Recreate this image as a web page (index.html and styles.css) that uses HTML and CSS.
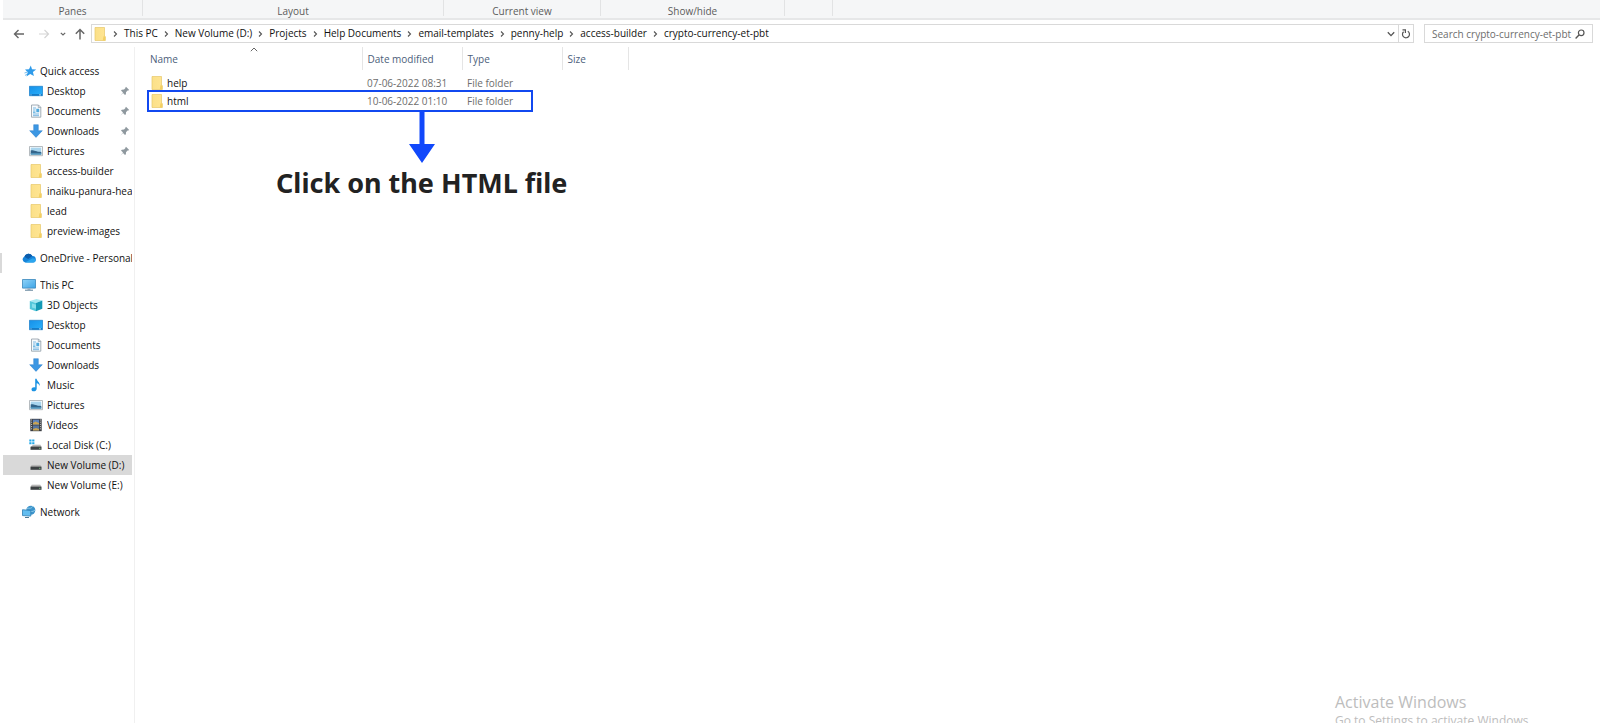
FILE: index.html
```html
<!DOCTYPE html>
<html lang="en">
<head>
<meta charset="utf-8">
<title>crypto-currency-et-pbt</title>
<link rel="stylesheet" href="styles.css">
</head>
<body>
<svg class="defs" aria-hidden="true">
  <defs>
    <linearGradient id="g-folder" x1="0" y1="0" x2="1" y2="0"><stop offset="0" stop-color="#fbe089"/><stop offset="1" stop-color="#ffe592"/></linearGradient>
    <linearGradient id="g-desk" x1="0" y1="0" x2="1" y2="1"><stop offset="0" stop-color="#1690e8"/><stop offset="1" stop-color="#2bb1fb"/></linearGradient>
    <linearGradient id="g-pc" x1="0" y1="0" x2="1" y2="1"><stop offset="0" stop-color="#8fd3f8"/><stop offset="1" stop-color="#3da4e6"/></linearGradient>
    <linearGradient id="g-drive" x1="0" y1="0" x2="0" y2="1"><stop offset="0" stop-color="#d2d2d2"/><stop offset="1" stop-color="#8c8c8c"/></linearGradient>
  </defs>
  <symbol id="i-folder" viewBox="0 0 14 14"><path d="M2 .5h9.500v8.500l.8.700v3.800H2z" fill="url(#g-folder)" stroke="#e6c768" stroke-width=".7"/><path d="M10.500 9.200h1.800v4.300H9.700z" fill="#f3cf62"/></symbol>
  <symbol id="i-star" viewBox="0 0 14 14"><path d="M7.800 1.500l1.200 3.700 4.200.3-3.300 2.600 1 4-3.700-2-3.800 2.400 1.300-4.300L2 5.400l4-.2z" fill="#2f9bea"/><path d="M1.500 9l3-1M2 11.500l2-1.500" stroke="#74bdf0" stroke-width="1"/></symbol>
  <symbol id="i-desktop" viewBox="0 0 14 14"><path d="M.4 2.300h13.200v9.400H.4z" fill="url(#g-desk)" stroke="#1478c6" stroke-width=".7"/><path d="M1 10.900h12" stroke="#0b64ac" stroke-width="1"/><path d="M1.500 10.900h1M10 10.900h2" stroke="#d5eeff" stroke-width=".8"/></symbol>
  <symbol id="i-document" viewBox="0 0 14 14"><path d="M2.500 1h7l2.300 2.300V13.200H2.500z" fill="#f8fbfd" stroke="#8e9ba5" stroke-width=".8"/><path d="M9.300 1v2.500h2.500" fill="none" stroke="#8e9ba5" stroke-width=".7"/><path d="M4 4h3M4 6h2.500M4 10h6M4 11.700h6" stroke="#69aede" stroke-width=".9"/><path d="M7.300 4.800h2.900v3.500H7.300zM4 7.500h2.500v1.200H4z" fill="#4fa9dd"/></symbol>
  <symbol id="i-download" viewBox="0 0 14 14"><path d="M4.700.7h4.600v6h4L7 13.400.7 6.700h4z" fill="#3c97e3" stroke="#2a7fcb" stroke-width=".5"/></symbol>
  <symbol id="i-picture" viewBox="0 0 14 14"><path d="M.5 2.500h13v9.200H.5z" fill="#fff" stroke="#a2a9ae" stroke-width=".8"/><path d="M1.700 3.600h10.600v7H1.700z" fill="#a9d5ee"/><path d="M1.700 6.600c2.500-1 4.500 1.200 10.600 1.500v2.500H1.700z" fill="#34658a"/><path d="M1.700 9.300h10.600v1.300H1.700z" fill="#5aa2c9"/></symbol>
  <symbol id="i-cloud" viewBox="0 0 14 14"><path d="M3.200 11.400A3 3 0 0 1 2.400 5.700 4.300 4.300 0 0 1 10.300 5a3.200 3.200 0 0 1 .6 6.400z" fill="#1683d8"/><path d="M2.400 5.700A4.300 4.300 0 0 1 10.300 5L6.200 8z" fill="#0b5cab"/><path d="M3 11.400l7.600-4.200q3 0 3 2.300t-2.700 1.900z" fill="#2ba5ee"/></symbol>
  <symbol id="i-pc" viewBox="0 0 14 14"><path d="M.5 1.500h13v8.600H.5z" fill="url(#g-pc)" stroke="#3986bb" stroke-width=".8"/><path d="M5.500 10.200h3v1.600h-3z" fill="#9bb2c2"/><path d="M3 12.200h8" stroke="#5c7f97" stroke-width="1"/></symbol>
  <symbol id="i-cube" viewBox="0 0 14 14"><path d="M.8 3L7.500 1 13.300 2.500 7 5z" fill="#a5e8f1"/><path d="M.8 3L7 5v8.300L.8 11z" fill="#53c7da"/><path d="M7 5l6.300-2.500v8.300L7 13.300z" fill="#169ab5"/><path d="M3 5.500l4 1.300v4L3 9.500z" fill="#87dfeb"/></symbol>
  <symbol id="i-music" viewBox="0 0 14 14"><path d="M6.200.8h1.400c.2 2.600 3.800 3.400 3.100 7.300-.3-1.800-1.500-2.600-3-2.900v5.600c0 3-5.200 3.500-5.200.7 0-2 2.100-2.700 3.700-2z" fill="#1c93e3"/></symbol>
  <symbol id="i-video" viewBox="0 0 14 14"><path d="M1.300.8h11.400v12.400H1.300z" fill="#3a3d42"/><path d="M4 1.600h6v5H4z" fill="#5d83bd"/><path d="M4 7.400h6v5H4z" fill="#56749f"/><path d="M4 5l2.500-1.500L10 5v1.600H4zM4 11l3-1 3 1v1.400H4z" fill="#caa452"/><path d="M2.600 1.500v11M11.400 1.500v11" stroke="#cdd0d3" stroke-width="1" stroke-dasharray="1 1.200"/></symbol>
  <symbol id="i-drive" viewBox="0 0 14 14"><path d="M2.800 6.600h8.400L12.500 9h-11z" fill="url(#g-drive)"/><path d="M1.500 8.800h11v3h-11z" fill="#3d4244"/><path d="M10.200 10.300h1.200" stroke="#8bdc92" stroke-width=".9"/></symbol>
  <symbol id="i-sysdrive" viewBox="0 0 14 14"><path d="M.3 1.500h2.200v2H.3zM3.200 1.500h2.200v2H3.200zM.3 4.300h2.200v2H.3zM3.200 4.300h2.200v2H3.200z" fill="#22a8e8"/><path d="M4.500 6.600h6.800L12.500 9h-11z" fill="url(#g-drive)"/><path d="M1.500 8.800h11v3h-11z" fill="#3d4244"/><path d="M10.200 10.300h1.200" stroke="#8bdc92" stroke-width=".9"/></symbol>
  <symbol id="i-network" viewBox="0 0 14 14"><circle cx="8.800" cy="5.200" r="4.500" fill="#3d94cb"/><path d="M5 4c2-2 3.500 1 6-3M6 8c2-3 4 0 7-3" stroke="#8dcbe9" fill="none"/><path d="M.5 4.700l8.300.8v5.600L.5 10.600z" fill="#62bdf0" stroke="#2d7db3" stroke-width=".8"/><path d="M3 12.500h4" stroke="#4c7894" stroke-width="1"/></symbol>
  <symbol id="i-pin" viewBox="0 0 10 10"><path d="M6 .8L9.200 4l-.9.600-.7-.1L6 6.200l-.1 2L5 9 3 7 .5 9.500 3 6.500l-2-2 .8-.8 2.200-.1L5.500 2l-.1-.6z" fill="#8f999f"/></symbol>
  <symbol id="i-chev" viewBox="0 0 17 10"><path d="M7 2.500L9.500 5 7 7.500" fill="none" stroke="#555" stroke-width="1.100"/></symbol>
</svg>

<header class="ribbon">
  <div class="ribbon-group panes">Panes</div>
  <div class="ribbon-group layout">Layout</div>
  <div class="ribbon-group view">Current view</div>
  <div class="ribbon-group show">Show/hide</div>
  <div class="ribbon-group options"></div>
</header>

<div class="toolbar">
  <div class="nav-buttons">
    <button class="nav-btn" aria-label="Back"><svg width="12" height="12" viewBox="0 0 12 12"><path d="M11 6H1.500M5.500 2L1.500 6l4 4" fill="none" stroke="#666" stroke-width="1.400"/></svg></button>
    <button class="nav-btn forward" aria-label="Forward"><svg width="12" height="12" viewBox="0 0 12 12"><path d="M1 6h9.500M6.500 2l4 4-4 4" fill="none" stroke="#d4d4d4" stroke-width="1.200"/></svg></button>
    <button class="nav-btn recent" aria-label="Recent locations"><svg width="6" height="6" viewBox="0 0 6 6"><path d="M.8 1.800L3 4l2.200-2.200" fill="none" stroke="#666" stroke-width="1.200"/></svg></button>
    <button class="nav-btn" aria-label="Up"><svg width="12" height="12" viewBox="0 0 12 12"><path d="M6 11.500V1.500M1.800 5.700L6 1.500l4.200 4.200" fill="none" stroke="#666" stroke-width="1.500"/></svg></button>
  </div>
  <nav class="address" aria-label="Address">
    <svg class="icon"><use href="#i-folder"/></svg>
    <ol class="crumbs">
      <li><svg class="chev"><use href="#i-chev"/></svg><a href="#">This PC</a></li>
      <li><svg class="chev"><use href="#i-chev"/></svg><a href="#">New Volume (D:)</a></li>
      <li><svg class="chev"><use href="#i-chev"/></svg><a href="#">Projects</a></li>
      <li><svg class="chev"><use href="#i-chev"/></svg><a href="#">Help Documents</a></li>
      <li><svg class="chev"><use href="#i-chev"/></svg><a href="#">email-templates</a></li>
      <li><svg class="chev"><use href="#i-chev"/></svg><a href="#">penny-help</a></li>
      <li><svg class="chev"><use href="#i-chev"/></svg><a href="#">access-builder</a></li>
      <li><svg class="chev"><use href="#i-chev"/></svg><a href="#">crypto-currency-et-pbt</a></li>
    </ol>
    <button class="history" aria-label="Previous locations"><svg width="8" height="8" viewBox="0 0 8 8"><path d="M.8 2.200L4 5.600l3.200-3.400" fill="none" stroke="#555" stroke-width="1.300"/></svg></button>
    <button class="refresh" aria-label="Refresh"><svg width="10" height="10" viewBox="0 0 10 10"><path d="M6.800 2.300A3.500 3.500 0 1 1 2.600 2.700M1.500.9h2.900v3" fill="none" stroke="#555" stroke-width="1.200"/></svg></button>
  </nav>
  <form class="search">
    <input type="search" aria-label="Search" placeholder="Search crypto-currency-et-pbt">
    <button type="button" aria-label="Search"><svg width="10" height="10" viewBox="0 0 10 10"><circle cx="6.200" cy="3.800" r="2.800" fill="none" stroke="#555" stroke-width="1.200"/><path d="M4.200 5.800L.6 9.400" stroke="#555" stroke-width="1.400"/></svg></button>
  </form>
</div>

<div class="explorer">
  <nav class="sidebar" aria-label="Folders">
    <ul class="group">
      <li><a class="item root quick" href="#"><svg class="icon"><use href="#i-star"/></svg><span>Quick access</span></a></li>
      <li><a class="item" href="#"><svg class="icon"><use href="#i-desktop"/></svg><span>Desktop</span><svg class="pin"><use href="#i-pin"/></svg></a></li>
      <li><a class="item" href="#"><svg class="icon"><use href="#i-document"/></svg><span>Documents</span><svg class="pin"><use href="#i-pin"/></svg></a></li>
      <li><a class="item" href="#"><svg class="icon"><use href="#i-download"/></svg><span>Downloads</span><svg class="pin"><use href="#i-pin"/></svg></a></li>
      <li><a class="item" href="#"><svg class="icon"><use href="#i-picture"/></svg><span>Pictures</span><svg class="pin"><use href="#i-pin"/></svg></a></li>
      <li><a class="item" href="#"><svg class="icon"><use href="#i-folder"/></svg><span>access-builder</span></a></li>
      <li><a class="item" href="#"><svg class="icon"><use href="#i-folder"/></svg><span>inaiku-panura-head</span></a></li>
      <li><a class="item" href="#"><svg class="icon"><use href="#i-folder"/></svg><span>lead</span></a></li>
      <li><a class="item" href="#"><svg class="icon"><use href="#i-folder"/></svg><span>preview-images</span></a></li>
    </ul>
    <ul class="group">
      <li><a class="item root" href="#"><svg class="icon"><use href="#i-cloud"/></svg><span>OneDrive - Personal</span></a></li>
    </ul>
    <ul class="group">
      <li><a class="item root" href="#"><svg class="icon"><use href="#i-pc"/></svg><span>This PC</span></a></li>
      <li><a class="item" href="#"><svg class="icon"><use href="#i-cube"/></svg><span>3D Objects</span></a></li>
      <li><a class="item" href="#"><svg class="icon"><use href="#i-desktop"/></svg><span>Desktop</span></a></li>
      <li><a class="item" href="#"><svg class="icon"><use href="#i-document"/></svg><span>Documents</span></a></li>
      <li><a class="item" href="#"><svg class="icon"><use href="#i-download"/></svg><span>Downloads</span></a></li>
      <li><a class="item" href="#"><svg class="icon"><use href="#i-music"/></svg><span>Music</span></a></li>
      <li><a class="item" href="#"><svg class="icon"><use href="#i-picture"/></svg><span>Pictures</span></a></li>
      <li><a class="item" href="#"><svg class="icon"><use href="#i-video"/></svg><span>Videos</span></a></li>
      <li><a class="item" href="#"><svg class="icon"><use href="#i-sysdrive"/></svg><span>Local Disk (C:)</span></a></li>
      <li><a class="item selected" href="#" aria-current="true"><svg class="icon"><use href="#i-drive"/></svg><span>New Volume (D:)</span></a></li>
      <li><a class="item" href="#"><svg class="icon"><use href="#i-drive"/></svg><span>New Volume (E:)</span></a></li>
    </ul>
    <ul class="group">
      <li><a class="item root" href="#"><svg class="icon"><use href="#i-network"/></svg><span>Network</span></a></li>
    </ul>
    <div class="edge-marker"></div>
  </nav>

  <main class="content">
    <table class="files">
      <colgroup><col class="c-name"><col class="c-date"><col class="c-type"><col class="c-size"></colgroup>
      <thead>
        <tr>
          <th scope="col" aria-sort="ascending">Name<svg class="sort" width="8" height="5" viewBox="0 0 8 5"><path d="M.8 4.200L4 1l3.200 3.200" fill="none" stroke="#666" stroke-width="1"/></svg></th>
          <th scope="col">Date modified</th><th scope="col">Type</th><th scope="col">Size</th>
        </tr>
      </thead>
      <tbody>
        <tr><td><a class="file" href="#"><svg class="icon"><use href="#i-folder"/></svg>help</a></td><td>07-06-2022 08:31</td><td>File folder</td><td></td></tr>
        <tr><td><a class="file" href="#"><svg class="icon"><use href="#i-folder"/></svg>html</a></td><td>10-06-2022 01:10</td><td>File folder</td><td></td></tr>
      </tbody>
    </table>
    <div class="highlight"></div>
    <div class="callout">
      <svg width="26" height="52" viewBox="0 0 26 52"><path d="M10.500 0h5v33H26L13 52 0 33h10.500z" fill="#1148fb"/></svg>
      <p>Click on the HTML file</p>
    </div>
  </main>
</div>

<aside class="watermark">
  <p class="watermark-title">Activate Windows</p>
  <p>Go to Settings to activate Windows.</p>
</aside>
</body>
</html>
```
FILE: styles.css
```css
* { box-sizing: border-box; }
html { height: 100%; }
body {
  margin: 0;
  height: 100%;
  position: relative;
  overflow: hidden;
  display: flex;
  flex-direction: column;
  background: #fff;
  color: #111;
  font: 10px/20px "Open Sans", "Noto Sans", sans-serif;
}
a { color: inherit; text-decoration: none; }
ul, ol, p { margin: 0; padding: 0; list-style: none; }
button { border: 0; padding: 0; background: none; font: inherit; display: flex; align-items: center; justify-content: center; }
.defs { position: absolute; width: 0; height: 0; }
.icon { width: 14px; height: 14px; flex: none; display: block; }

.ribbon {
  display: flex;
  flex: none;
  height: 20px;
  margin-left: 3px;
  background: #f5f6f7;
  border-bottom: 2px solid #e6e7e8;
  color: #5c5c5c;
}
.ribbon-group {
  height: 16px;
  border-right: 1px solid #e2e3e4;
  text-align: center;
  line-height: 22px;
}
.panes { width: 140px; }
.layout { width: 301px; }
.view { width: 157px; }
.show { width: 184px; }
.options { width: 48px; }

.toolbar {
  display: flex;
  flex: none;
  align-items: center;
  padding: 4px 7px 4px 13px;
}
.nav-buttons { display: flex; flex: none; align-items: center; width: 78px; gap: 6px; }
.nav-btn { height: 19px; }
.forward { margin-left: 7px; }
.recent { margin-left: 4px; }
.nav-btn:last-child { margin-left: 2px; }
.address {
  display: flex;
  flex: 1;
  align-items: center;
  height: 19px;
  margin-right: 10px;
  padding-left: 1px;
  border: 1px solid #d9d9d9;
}
.crumbs { display: flex; flex: 1; line-height: 17px; }
.crumbs li { display: flex; align-items: center; }
.chev { width: 17px; height: 10px; }
.history { width: 14px; height: 17px; }
.refresh { width: 15px; height: 17px; border-left: 1px solid #d9d9d9; }
.search {
  display: flex;
  flex: none;
  align-items: center;
  width: 169px;
  height: 19px;
  padding: 0 7px;
  border: 1px solid #d9d9d9;
}
.search input {
  flex: 1;
  min-width: 0;
  height: 17px;
  border: 0;
  padding: 0;
  outline: 0;
  background: none;
  font: inherit;
}
.search input::placeholder { color: #6d6d6d; opacity: 1; }
.search input::-webkit-search-cancel-button { display: none; }

.explorer { display: flex; flex: 1; min-height: 0; }
.sidebar {
  position: relative;
  flex: none;
  width: 135px;
  padding: 14px 2px 0 3px;
  border-right: 1px solid #f0f0f0;
}
.group { margin-bottom: 7px; }
.item {
  display: flex;
  align-items: center;
  gap: 4px;
  height: 20px;
  padding-left: 26px;
  white-space: nowrap;
  overflow: hidden;
}
.item span { flex: 1; min-width: 0; overflow: hidden; }
.root { padding-left: 19px; }
.root.quick { padding-left: 20px; gap: 3px; }
.selected { background: #d9d9d9; }
.pin { width: 10px; height: 10px; flex: none; margin-right: 2px; }
.edge-marker {
  position: absolute;
  left: 0;
  top: 206px;
  width: 2px;
  height: 20px;
  background: #d9d9d9;
}

.content { position: relative; flex: 1; padding-left: 12px; }
.files { table-layout: fixed; width: 481px; border-collapse: collapse; }
.c-name { width: 215px; }
.c-date { width: 100px; }
.c-type { width: 100px; }
.c-size { width: 66px; }
.files th {
  position: relative;
  height: 23px;
  padding: 0 0 0 5px;
  border-right: 1px solid #e5e5e5;
  color: #4c607a;
  font-weight: 400;
  text-align: left;
}
.files th:first-child { padding-left: 3px; }
.files thead::after { content: ""; display: table-row; height: 4px; }
.files td { height: 18px; padding: 0 0 0 5px; line-height: 18px; color: #6d6d6d; }
.files td:first-child { padding-left: 3px; }
.file { display: flex; align-items: center; gap: 3px; color: #111; }
.sort { position: absolute; left: 103px; top: 0; }
.highlight {
  position: absolute;
  left: 12px;
  top: 43px;
  width: 386px;
  height: 22px;
  border: 2px solid #1148f0;
}
.callout {
  position: absolute;
  left: 141px;
  top: 64px;
  display: flex;
  flex-direction: column;
  align-items: center;
  white-space: nowrap;
}
.callout p {
  color: #222;
  font-family: "Noto Sans", "Open Sans", sans-serif;
  font-size: 27px;
  font-weight: 700;
  line-height: 40px;
}

.watermark {
  position: absolute;
  right: 70px;
  bottom: -7px;
  width: 195px;
  color: #bdbdbd;
  font-size: 12px;
  line-height: 18px;
  white-space: nowrap;
}
.watermark-title { font-size: 16px; line-height: 20px; }
```
